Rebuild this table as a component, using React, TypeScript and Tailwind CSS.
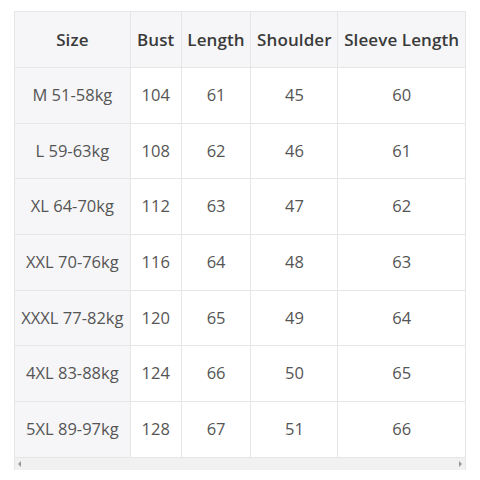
import React from "react";

const cols = [116, 51, 70, 87, 128];
const header = ["Size", "Bust", "Length", "Shoulder", "Sleeve Length"];
const rows = [
  ["M 51-58kg", "104", "61", "45", "60"],
  ["L 59-63kg", "108", "62", "46", "61"],
  ["XL 64-70kg", "112", "63", "47", "62"],
  ["XXL 70-76kg", "116", "64", "48", "63"],
  ["XXXL 77-82kg", "120", "65", "49", "64"],
  ["4XL 83-88kg", "124", "66", "50", "65"],
  ["5XL 89-97kg", "128", "67", "51", "66"],
];

export default function App() {
  return (
    <div className="w-[480px] h-[480px] bg-white pt-[11px] pl-[14px]" style={{ fontFamily: '"Open Sans", sans-serif' }}>
      <div className="w-[452px] border-l border-t border-[#e6e6e6]">
        <div className="flex h-[56px] bg-[#f6f6f8]">
          {header.map((h, i) => (
            <div
              key={i}
              style={{ width: cols[i] }}
              className="flex items-center justify-center border-r border-b border-[#e6e6e6] text-[17px] font-semibold text-[#3a3a3a] whitespace-nowrap tracking-[0.1px]"
            >
              {h}
            </div>
          ))}
        </div>
        {rows.map((r, ri) => (
          <div key={ri} className="flex h-[55.7px]">
            {r.map((c, i) => (
              <div
                key={i}
                style={{ width: cols[i] }}
                className={`flex items-center justify-center border-r border-b border-[#e6e6e6] text-[16.5px] text-[#555] whitespace-nowrap ${i === 0 ? "bg-[#f6f6f8]" : "bg-white"}`}
              >
                {c}
              </div>
            ))}
          </div>
        ))}
        <div className="flex h-[12px] items-center justify-between bg-[#f1f1f1] px-[3px] border-r border-[#e6e6e6]">
          <svg width="4" height="6" viewBox="0 0 4 6">
            <path d="M3 0 L0 3 L3 6 Z" fill="#999" />
          </svg>
          <svg width="4" height="6" viewBox="0 0 4 6">
            <path d="M1 0 L4 3 L1 6 Z" fill="#999" />
          </svg>
        </div>
      </div>
    </div>
  );
}
